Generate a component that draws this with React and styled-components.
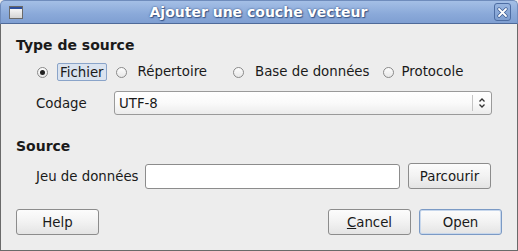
import React from 'react'
import styled, { createGlobalStyle } from 'styled-components'

const Global = createGlobalStyle`
  html, body { margin: 0; padding: 0; background: #ededed; }
  body { font-family: "DejaVu Sans", sans-serif; font-size: 13.33px; color: #1a1a1a; }
  * { box-sizing: border-box; }
`

const Window = styled.div`
  width: 518px;
  height: 251px;
  display: flex;
  flex-direction: column;
  background: #ededed;
`

const TitleBar = styled.div`
  height: 24px;
  display: flex;
  align-items: center;
  padding: 0 6px 0 8px;
  background: linear-gradient(#a4bfe6, #8aa9d9 60%, #7f9fd2);
  border: 1px solid #6f8cbc;
  border-bottom: 1px solid #4f6a99;
  border-radius: 5px 5px 0 0;
  color: #fff;
`

const Title = styled.div`
  flex: 1;
  text-align: center;
  font-weight: bold;
  font-size: 14px;
  text-shadow: 0 0 2px #2f4a7a, 1px 1px 1px #3d5a8c;
`

const Close = styled.div`
  width: 17px;
  height: 18px;
  border: 1px solid #4d6da3;
  border-radius: 3px;
  background: linear-gradient(#98b5e0, #7e9ed0);
  display: flex;
  align-items: center;
  justify-content: center;
`

const Body = styled.div`
  flex: 1;
  border: 1px solid #6a6a6a;
  border-top: none;
  padding: 11px 15px 0 15px;
  display: flex;
  flex-direction: column;
`

const Heading = styled.div`
  font-weight: bold;
  font-size: 14px;
  height: 20px;
  line-height: 20px;
  margin-top: ${p => p.$top || 0}px;
`

const Row = styled.div`
  display: flex;
  align-items: center;
  padding-left: ${p => p.$indent || 0}px;
  margin-top: ${p => p.$top || 0}px;
  height: ${p => p.$h || 24}px;
`

const Radio = styled.label`
  display: flex;
  align-items: center;
  margin-right: ${p => p.$gap}px;
`

const Circle = styled.span`
  width: 11px;
  height: 11px;
  border-radius: 50%;
  border: 1px solid #8a8a8a;
  background: linear-gradient(#fdfdfd, #e8e8e8);
  display: flex;
  align-items: center;
  justify-content: center;
  margin-right: ${p => p.$mr}px;
  &::after {
    content: '';
    width: 5px;
    height: 5px;
    border-radius: 50%;
    background: ${p => p.$on ? '#222' : 'transparent'};
  }
`

const RadioText = styled.span`
  padding: 0 ${p => p.$focus ? 2 : 0}px;
  height: 18px;
  line-height: 17px;
  border: ${p => p.$focus ? '1px solid #8aa4c9' : 'none'};
  border-radius: 2px;
  background: ${p => p.$focus ? '#dae3ef' : 'transparent'};
`

const Label = styled.span`
  width: ${p => p.$w}px;
  flex-shrink: 0;
`

const Combo = styled.div`
  width: 378px;
  height: 24px;
  border: 1px solid #9a9a9a;
  border-radius: 3px;
  background: linear-gradient(#ffffff, #fafafa 50%, #ececec);
  display: flex;
  align-items: center;
  padding-left: 4px;
`

const ComboText = styled.span`
  flex: 1;
`

const ComboArrow = styled.div`
  width: 19px;
  height: 16px;
  border-left: 1px solid #c4c4c4;
  display: flex;
  align-items: center;
  justify-content: center;
`

const Input = styled.div`
  width: 255px;
  height: 25px;
  border: 1px solid #8c8c8c;
  border-radius: 3px;
  background: #fff;
  margin-right: 8px;
`

const Button = styled.button`
  width: 83px;
  height: 26px;
  border: 1px solid ${p => p.$default ? '#7b9ac5' : '#8c8c8c'};
  border-radius: 3px;
  background: linear-gradient(#fcfcfc, #f2f2f2 50%, #e4e4e4);
  font-family: "DejaVu Sans", sans-serif;
  font-size: 13.33px;
  color: #1a1a1a;
  padding: 0;
  margin-left: ${p => p.$ml || 0}px;
  box-shadow: ${p => p.$default ? 'inset 0 0 0 1px #c7d7ec' : 'none'};
`

const Spacer = styled.div`
  flex: 1;
`

const Footer = styled.div`
  display: flex;
  align-items: center;
  margin-top: 20px;
`

function WinIcon() {
  return (
    <svg width="14" height="13" viewBox="0 0 14 13">
      <defs>
        <linearGradient id="g" x1="0" y1="0" x2="0" y2="1">
          <stop offset="0" stopColor="#f6f6f6" />
          <stop offset="1" stopColor="#d4d4d4" />
        </linearGradient>
      </defs>
      <rect x="0.5" y="0.5" width="13" height="12" fill="#e8e8e8" stroke="#6a6a6a" />
      <rect x="1" y="1" width="12" height="2" fill="#2d4f9e" />
      <rect x="1" y="3" width="12" height="9" fill="url(#g)" />
    </svg>
  )
}

export default function App() {
  return (
    <Window>
      <Global />
      <TitleBar>
        <WinIcon />
        <Title>Ajouter une couche vecteur</Title>
        <Close>
          <svg width="11" height="11" viewBox="0 0 11 11">
            <path d="M2 2 L9 9 M9 2 L2 9" stroke="#3d5c92" strokeWidth="3.2" strokeLinecap="round" />
            <path d="M2 2 L9 9 M9 2 L2 9" stroke="#fff" strokeWidth="1.8" strokeLinecap="round" />
          </svg>
        </Close>
      </TitleBar>
      <Body>
        <Heading>Type de source</Heading>
        <Row $indent={21} $top={6} $h={22}>
          <Radio $gap={9}><Circle $on $mr={9} /><RadioText $focus>Fichier</RadioText></Radio>
          <Radio $gap={26}><Circle $mr={11} /><RadioText>Répertoire</RadioText></Radio>
          <Radio $gap={13}><Circle $mr={11} /><RadioText>Base de données</RadioText></Radio>
          <Radio $gap={0}><Circle $mr={8} /><RadioText>Protocole</RadioText></Radio>
        </Row>
        <Row $indent={20} $top={8} $h={24}>
          <Label $w={78}>Codage</Label>
          <Combo>
            <ComboText>UTF-8</ComboText>
            <ComboArrow>
              <svg width="8" height="12" viewBox="0 0 8 12">
                <path d="M1.5 4.5 L4 2 L6.5 4.5 M1.5 7.5 L4 10 L6.5 7.5" fill="none" stroke="#333" strokeWidth="1.3" />
              </svg>
            </ComboArrow>
          </Combo>
        </Row>
        <Heading $top={21}>Source</Heading>
        <Row $indent={20} $top={7} $h={26}>
          <Label $w={109}>Jeu de données</Label>
          <Input />
          <Button>Parcourir</Button>
        </Row>
        <Footer>
          <Button>Help</Button>
          <Spacer />
          <Button>
            <u>C</u>ancel
          </Button>
          <Button $default $ml={8}>Open</Button>
        </Footer>
      </Body>
    </Window>
  )
}
